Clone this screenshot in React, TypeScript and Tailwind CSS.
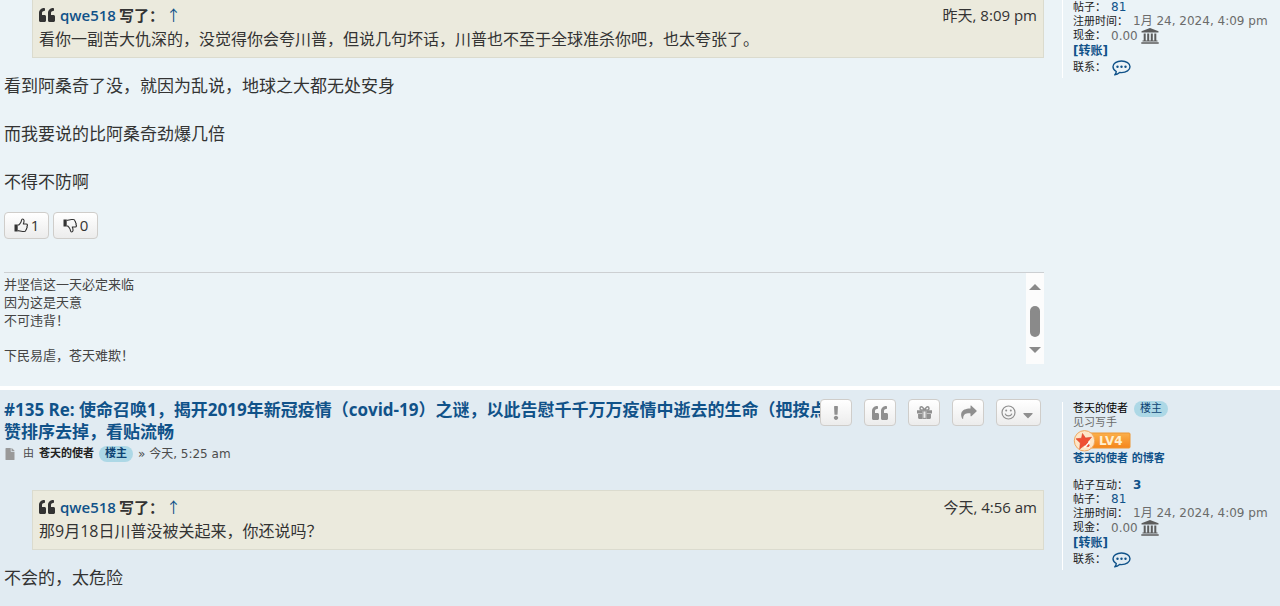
import React from "react";
import { FaCaretDown, FaExclamation, FaFile, FaQuoteLeft } from "react-icons/fa";

const ThumbIcon = ({ className = "" }: { className?: string }) => (
  <svg className={className} width="14" height="15" viewBox="0 0 14 15" fill="none">
    <path d="M.5 6.500h3.200v7H.5z" fill="#333" />
    <path
      d="M3.700 7h1c1-.8 1.600-1.700 2.200-2.700C7.600 3.200 7.300 1 8.500 1c2 0 1.800 2.500.8 5h3c1.300 0 1.500 1.600.6 2.200.5.7.3 1.600-.4 2 .2.800-.1 1.400-.7 1.700.1 1.200-.6 1.600-1.600 1.600H8.500c-2 0-3-.9-4.800-.9"
      stroke="#333"
      strokeWidth="1.1"
      strokeLinejoin="round"
    />
  </svg>
);

const GiftIcon = () => (
  <svg width="15" height="15" viewBox="0 0 14 14" fill="currentColor">
    <path d="M0 5h5v3H0zM9 5h5v3H9zM1 8.500h4V13H2a1 1 0 0 1-1-1zM9 8.500h4V12a1 1 0 0 1-1 1H9z" />
    <path d="M5 5h4v8H5z" />
    <path d="M6 6h2v6H6z" fill="#e9e9e9" />
    <path
      d="M7 4.700C6 3 5.200 1.700 4.200 1.700c-1.800 0-1.900 2.900 0 3zM7 4.700c1-1.700 1.800-3 2.800-3 1.800 0 1.900 2.900 0 3z"
      fill="none"
      stroke="currentColor"
      strokeWidth="1.4"
    />
  </svg>
);

const ForwardIcon = () => (
  <svg width="17" height="15" viewBox="0 0 17 15" fill="currentColor">
    <path d="M10.500.8c.3-.3.600-.2.900 0l5.100 4.700c.3.3.3.700 0 1l-5.100 4.700c-.4.300-.9.100-.9-.4V8.400C6 8.200 3.200 9 3.200 13.600c0 .6-.6.6-.8.200C.2 9.500.2 3.700 10.500 3.500z" />
  </svg>
);

const SmileIcon = () => (
  <svg width="15" height="15" viewBox="0 0 15 15" fill="none" stroke="currentColor">
    <circle cx="7.500" cy="7.500" r="6.500" strokeWidth="1.200" />
    <path d="M4.300 9c.9 2.500 5.500 2.500 6.400 0" strokeWidth="1.100" strokeLinecap="round" />
    <circle cx="5.200" cy="5.500" r="1" fill="currentColor" stroke="none" />
    <circle cx="9.800" cy="5.500" r="1" fill="currentColor" stroke="none" />
  </svg>
);

const BankIcon = () => (
  <svg className="ml-[3px]" width="18" height="16" viewBox="0 0 18 16" fill="#5c5c5c">
    <path d="M9 0l8.500 3.200v1.300H.5V3.200zM2.700 5.500h2v7h-2zM6.200 5.500h2v7h-2zM9.800 5.500h2v7h-2zM13.300 5.500h2v7h-2zM1.500 12.500h15v1h-15zM.3 14.300h17.400v1.500H.3z" />
  </svg>
);

const ChatIcon = () => (
  <svg width="19" height="16" viewBox="0 0 19 16" fill="none" stroke="currentColor">
    <path
      d="M9.500 1c4.800 0 8.500 2.500 8.500 5.800s-3.700 5.800-8.500 5.800c-.7 0-1.300 0-1.900-.1C6 13.900 4.400 14.600 2.700 14.900c.9-.9 1.500-2 1.600-3.400C2.300 10.400 1 8.700 1 6.800 1 3.500 4.700 1 9.500 1z"
      strokeWidth="1.4"
      strokeLinejoin="round"
    />
    <circle cx="5.500" cy="6.800" r="1.200" fill="currentColor" stroke="none" />
    <circle cx="9.500" cy="6.800" r="1.200" fill="currentColor" stroke="none" />
    <circle cx="13.500" cy="6.800" r="1.200" fill="currentColor" stroke="none" />
  </svg>
);

const LevelBadge = () => (
  <svg width="58" height="22" viewBox="0 0 58 22" role="img" aria-label="LV4">
    <defs>
      <linearGradient id="lv" x1="0" y1="0" x2="0" y2="1">
        <stop offset="0" stopColor="#fbb04c" />
        <stop offset="1" stopColor="#f5861a" />
      </linearGradient>
    </defs>
    <rect x="12" y="3" width="45" height="15" rx="1" fill="url(#lv)" stroke="#ee9632" />
    <circle cx="11.500" cy="10.800" r="10.200" fill="#fde6c8" stroke="#f0a860" />
    <path
      d="M9.500 3.500l3 4.500 6-.8-3.800 4.600 2.300 5.700-5.500-2.200-4.800 3.700.6-6-4.300-4.200 5.500-.6z"
      fill="#ef4f34"
      stroke="#d8442a"
      strokeWidth="0.6"
    />
    <path d="M11.500 17.500l5.500-6M15.500 18l1.500-1.500" stroke="#fff" strokeWidth="1.300" />
    <text
      x="26"
      y="15"
      fill="#fff0d0"
      fontFamily="DejaVu Sans, sans-serif"
      fontSize="12"
      fontWeight="bold"
    >
      LV4
    </text>
  </svg>
);

const OwnerTag = () => (
  <span className="inline-block rounded-full bg-[#add8e6] px-[6px] leading-4 text-[#0d4473]">
    楼主
  </span>
);

const Stats = () => (
  <>
    <div className="h-[14px]">
      帖子：<a href="#posts" className="ml-[5px] text-[12px] text-[#105289]">81</a>
    </div>
    <div className="h-[14px]">
      注册时间：
      <span className="ml-[5px] text-[12px] text-[#6b6b6b]">1月 24, 2024, 4:09 pm</span>
    </div>
    <div className="flex h-4 items-center">
      现金：<span className="ml-[5px] text-[12px] text-[#6b6b6b]">0.00</span>
      <BankIcon />
    </div>
    <div className="h-[14px]">
      <a href="#transfer" className="text-[12px] font-bold text-[#105289]">[转账]</a>
    </div>
    <div className="flex h-5 items-center">
      联系：
      <a href="#contact" aria-label="联系" className="ml-[6px] text-[#105289]">
        <ChatIcon />
      </a>
    </div>
  </>
);

type QuoteProps = {
  day: string;
  time: string;
  className: string;
  children: React.ReactNode;
};

const Quote = ({ day, time, className, children }: QuoteProps) => (
  <blockquote
    className={`ml-7 border border-[#dbdbce] bg-[#ebeadd] px-[6px] text-[#333] ${className}`}
  >
    <div className="flex h-6 items-center justify-between text-[15px]">
      <cite className="flex items-center font-semibold not-italic">
        <FaQuoteLeft className="mr-[5px] h-4 w-4" />
        <a href="#user" className="text-[#105289]">qwe518</a>
        <span className="ml-[3px] font-bold">写了：</span>
        <a href="#source" className="ml-[2px] font-normal text-[#105289]">↑</a>
      </cite>
      <span>
        {day}, {time}
      </span>
    </div>
    <p className="text-[16px] leading-6">{children}</p>
  </blockquote>
);

const buttonLook =
  "flex h-[27px] items-center rounded-[4px] border border-[#cfcdca] bg-linear-to-b from-white to-[#ececec]";

const tools = [
  { label: "举报", icon: <FaExclamation className="h-[14px] w-[14px]" /> },
  { label: "引用", icon: <FaQuoteLeft className="h-4 w-4" /> },
  { label: "打赏", icon: <GiftIcon /> },
  { label: "分享", icon: <ForwardIcon /> },
];

const sideLook =
  "w-[218px] shrink-0 self-start border-l border-white pl-[10px] font-[DejaVu_Sans,Noto_Sans_CJK_SC,sans-serif] text-[11px] leading-[14px] text-[#222]";

const App = () => {
  return (
    <div className="flex min-h-screen w-full flex-col gap-1 bg-white font-[Open_Sans,Noto_Sans_CJK_SC,sans-serif]">
      {/* Previous post */}
      <article className="flex gap-[18px] bg-[#ebf3f7] pb-[22px] pl-1">
        <div className="min-w-0 flex-1">
          <Quote day="昨天" time="8:09 pm" className="border-t-0 pt-[3px] pb-[6px]">
            看你一副苦大仇深的，没觉得你会夸川普，但说几句坏话，川普也不至于全球准杀你吧，也太夸张了。
          </Quote>
          <div className="mt-4 space-y-6 text-[17px] leading-6 text-[#333]">
            <p>看到阿桑奇了没，就因为乱说，地球之大都无处安身</p>
            <p>而我要说的比阿桑奇劲爆几倍</p>
            <p>不得不防啊</p>
          </div>
          <div className="mt-[18px] flex gap-1 text-[15px] text-[#333]">
            <button className={`${buttonLook} w-[45px] justify-center gap-[3px]`}>
              <ThumbIcon />1
            </button>
            <button className={`${buttonLook} w-[45px] justify-center gap-[3px]`}>
              <ThumbIcon className="-scale-y-100" />0
            </button>
          </div>

          {/* Signature */}
          <div className="mt-[33px] flex justify-between border-t border-[#cccfd2] text-[13px] leading-[18px] text-[#444]">
            <div className="pt-[2px]">
              <p>并坚信这一天必定来临</p>
              <p>因为这是天意</p>
              <p>不可违背！</p>
              <p className="mt-[17px]">下民易虐，苍天难欺！</p>
            </div>
            <div className="flex w-[18px] flex-col items-center bg-[#fcfcfc] pt-[11px]">
              <svg width="12" height="6" viewBox="0 0 12 6" fill="#8a8a8a">
                <path d="M6 0l6 6H0z" />
              </svg>
              <div className="mt-4 h-[31px] w-[10px] rounded-full bg-[#8a8a8a]" />
              <svg className="mt-[10px]" width="12" height="6" viewBox="0 0 12 6" fill="#8a8a8a">
                <path d="M6 6l6-6H0z" />
              </svg>
            </div>
          </div>
        </div>
        <aside className={sideLook}>
          <Stats />
        </aside>
      </article>

      {/* Current post */}
      <article className="flex flex-1 gap-[18px] bg-[#e1ebf2] pt-[9px] pb-4 pl-1">
        <div className="min-w-0 flex-1">
          <div className="flex items-start">
            <h3 className="min-w-0 flex-1 text-[17px] leading-[22px] font-bold text-[#105289]">
              <a href="#135">
                #135 Re: 使命召唤1，揭开2019年新冠疫情（covid-19）之谜，以此告慰千千万万疫情中逝去的生命（把按点赞排序去掉，看贴流畅
              </a>
            </h3>
            <div className="relative mr-[3px] -ml-4 flex shrink-0 gap-3 text-[#8f8f8f]">
              {tools.map((tool) => (
                <button
                  key={tool.label}
                  aria-label={tool.label}
                  className={`${buttonLook} w-8 justify-center`}
                >
                  {tool.icon}
                </button>
              ))}
              <button aria-label="表情" className={`${buttonLook} w-[45px] justify-center gap-1`}>
                <SmileIcon />
                <FaCaretDown className="mt-1 h-4 w-4" />
              </button>
            </div>
          </div>
          <div className="mt-[2px] flex h-[18px] items-center gap-[5px] font-[DejaVu_Sans,Noto_Sans_CJK_SC,sans-serif] text-[11px] leading-4 text-[#4c4c4c]">
            <FaFile className="mr-[2px] h-3 w-3 text-[#999]" />
            由
            <a href="#author" className="font-bold text-[#222]">苍天的使者</a>
            <strong className="flex"><OwnerTag /></strong>
            <span className="text-[12px]">» 今天, 5:25 am</span>
          </div>
          <Quote day="今天" time="4:56 am" className="mt-[27px] pt-1 pb-[6px]">
            那9月18日川普没被关起来，你还说吗？
          </Quote>
          <p className="mt-4 text-[17px] leading-6 text-[#333]">不会的，太危险</p>
        </div>
        <aside className={`${sideLook} mt-[3px]`}>
          <div className="flex h-[14px] items-center gap-[6px]">
            <a href="#author" className="text-black">苍天的使者</a>
            <OwnerTag />
          </div>
          <div className="h-[14px] text-[#6b6b6b]">见习写手</div>
          <LevelBadge />
          <div className="mb-3 h-[14px]">
            <a href="#blog" className="font-bold text-[#105289]">苍天的使者 的博客</a>
          </div>
          <div className="h-[14px]">
            帖子互动：
            <a href="#likes" className="ml-[5px] text-[12px] font-bold text-[#105289]">3</a>
          </div>
          <Stats />
        </aside>
      </article>
    </div>
  );
};

export default App;
